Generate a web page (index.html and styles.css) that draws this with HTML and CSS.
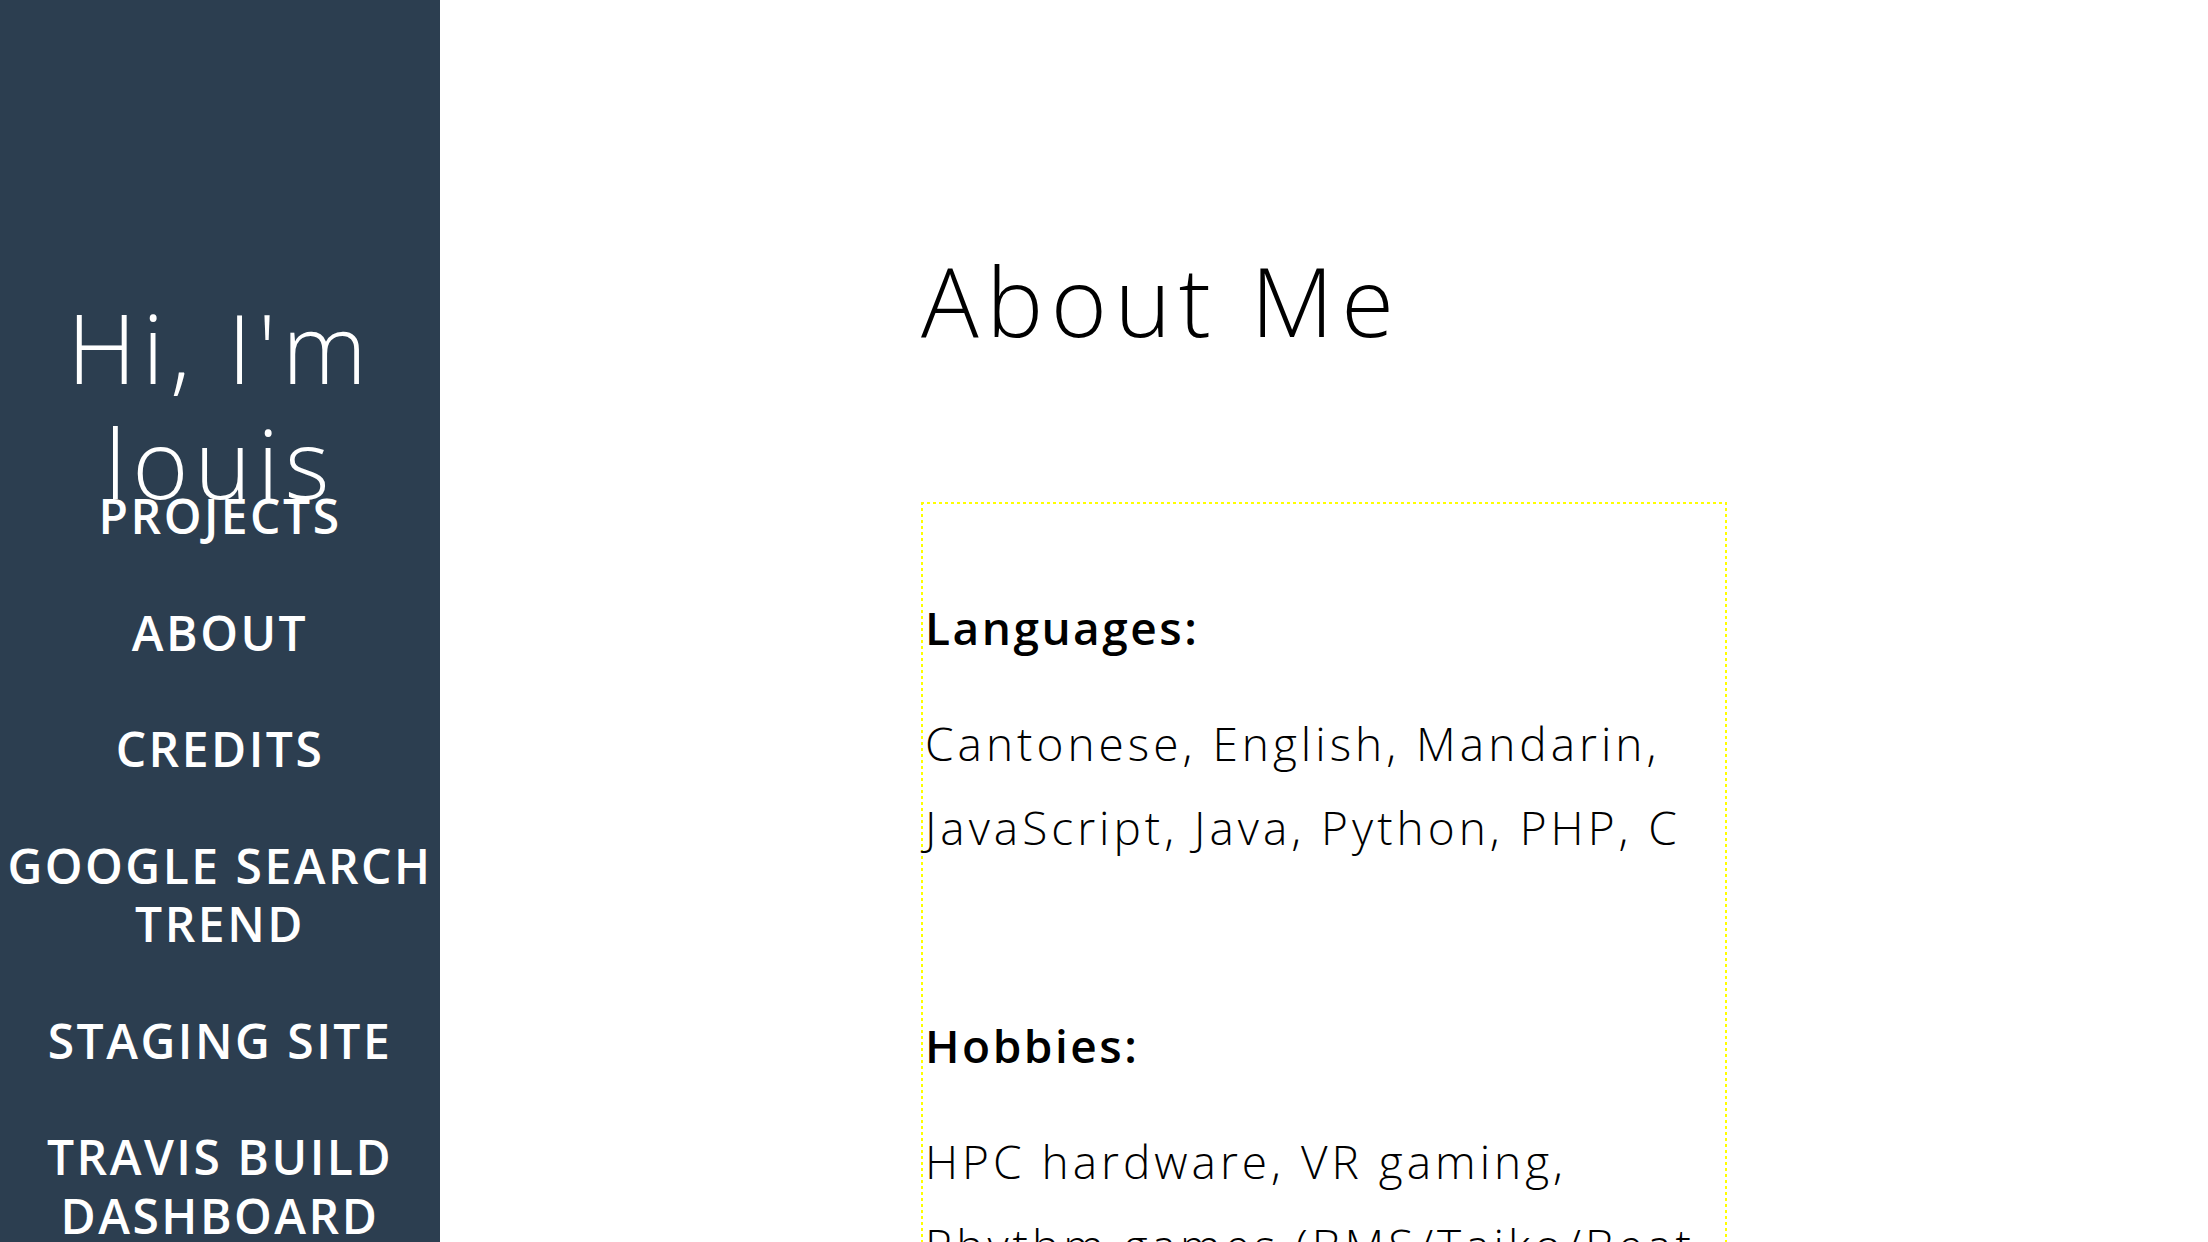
FILE: index.html
```html
<!DOCTYPE html>
<html lang="en">
<head>
<meta charset="utf-8">
<title>Louis</title>
<link rel="stylesheet" href="styles.css">
</head>
<body>
<div class="page">
  <aside class="sidebar">
    <header class="intro">
      <h1 class="intro-title">Hi, I'm louis</h1>
    </header>
    <nav class="nav">
      <a class="nav-link" href="#">PROJECTS</a>
      <a class="nav-link" href="#">ABOUT</a>
      <a class="nav-link" href="#">CREDITS</a>
      <a class="nav-link" href="#">GOOGLE SEARCH TREND</a>
      <a class="nav-link" href="#">STAGING SITE</a>
      <a class="nav-link" href="#">TRAVIS BUILD DASHBOARD</a>
    </nav>
  </aside>
  <main class="main">
    <div class="column">
      <h2 class="page-title">About Me</h2>
      <section class="about-box">
        <h3 class="about-label">Languages:</h3>
        <p class="about-text">Cantonese, English, Mandarin,<br>JavaScript, Java, Python, PHP, C</p>
        <h3 class="about-label about-label-gap">Hobbies:</h3>
        <p class="about-text">HPC hardware, VR gaming,<br>Rhythm games (BMS/Taiko/Beat<br>Saber)</p>
      </section>
    </div>
  </main>
</div>
</body>
</html>
```
FILE: styles.css
```css
html, body {
  margin: 0;
  padding: 0;
}

body {
  font-family: "Open Sans", "Liberation Sans", sans-serif;
  color: #000;
  background: #fff;
}

.page {
  display: flex;
  height: 100vh;
  overflow: hidden;
}

.sidebar {
  flex: 0 0 440px;
  box-sizing: border-box;
  background: #2c3e50;
  color: #fff;
  text-align: center;
  padding-top: 289px;
}

.intro {
  height: 198px;
}

.intro-title {
  margin: 0;
  font-size: 96px;
  font-weight: 300;
  line-height: 115px;
  letter-spacing: 6px;
}

.nav {
  display: flex;
  flex-direction: column;
  gap: 58px;
}

.nav-link {
  color: #fff;
  text-decoration: none;
  font-size: 48px;
  font-weight: 600;
  line-height: 58.5px;
  letter-spacing: 2.5px;
}

.main {
  flex: 1;
  display: flex;
  justify-content: center;
}

.column {
  width: 806px;
  padding-top: 241px;
}

.page-title {
  margin: 0 0 144px;
  font-size: 96px;
  font-weight: 300;
  line-height: 117px;
  letter-spacing: 7.5px;
}

.about-box {
  border: 2px solid transparent;
  padding: 95px 2px 0;
  background:
    repeating-linear-gradient(90deg, #ffff00 0 3px, transparent 3px 6px) left top / 100% 2px no-repeat,
    repeating-linear-gradient(90deg, #ffff00 0 3px, transparent 3px 6px) left bottom / 100% 2px no-repeat,
    repeating-linear-gradient(180deg, #ffff00 0 3px, transparent 3px 6px) left top / 2px 100% no-repeat,
    repeating-linear-gradient(180deg, #ffff00 0 3px, transparent 3px 6px) right top / 2px 100% no-repeat;
  background-origin: border-box;
}

.about-label {
  margin: 0 0 46px;
  font-size: 46px;
  font-weight: 600;
  line-height: 56px;
  letter-spacing: 2.5px;
}

.about-label-gap {
  margin-top: 148px;
}

.about-text {
  margin: 0;
  font-size: 46px;
  font-weight: 300;
  line-height: 84px;
  letter-spacing: 4px;
}
```
